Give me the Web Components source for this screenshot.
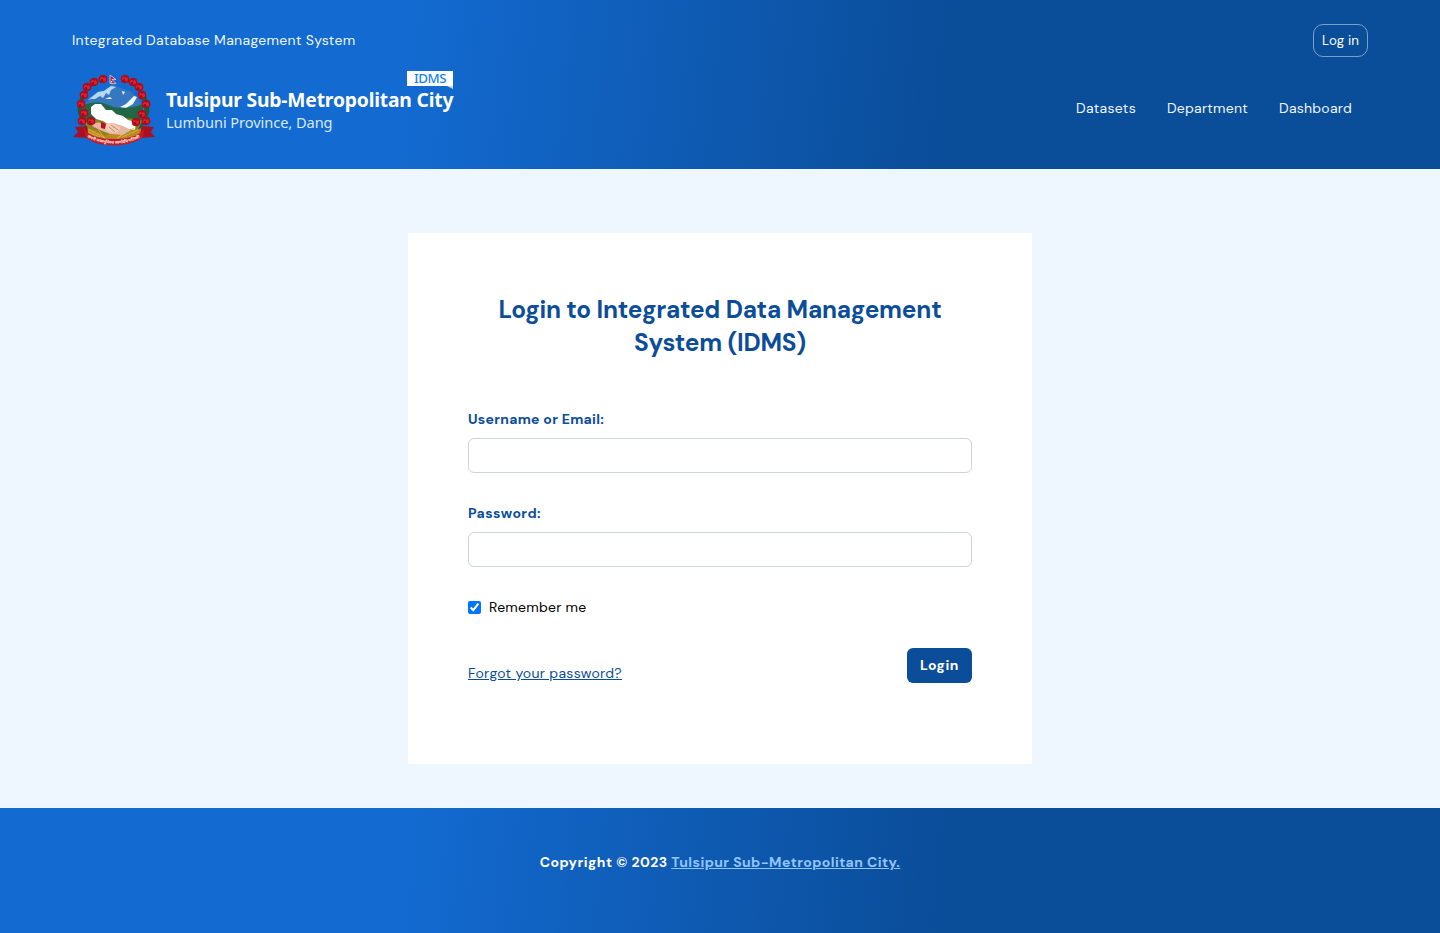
<!DOCTYPE html>
<html lang="en"><head><meta charset="utf-8"><title>IDMS Login</title>
<style>
html,body{margin:0;height:100%}
body{background:#eef6ff;font:14px/21px "DM Sans",Inter,sans-serif;font-optical-sizing:none;color:#000}
</style></head><body><idms-page></idms-page>
<script>
const define=(name,html,init)=>customElements.define(name,class extends HTMLElement{
  constructor(){super();this.attachShadow({mode:'open'}).innerHTML=html;}
  connectedCallback(){if(init)init(this);}
});

/* Tracks a line of text out to the width given in its "width" attribute. */
define('tracked-text','<style>:host{display:inline-block;white-space:nowrap}</style><slot></slot>',el=>{
  const w=parseFloat(el.getAttribute('width'));
  el.style.letterSpacing='0';
  const range=document.createRange();range.selectNodeContents(el);
  const n=el.textContent.length,natural=range.getBoundingClientRect().width;
  el.style.letterSpacing=((w-natural)/n).toFixed(3)+'px';
  el.style.width=w+'px';
});

/* Coat of arms: rhododendron wreath, mountain, map, clasped hands, ribbon. */
define('city-emblem',`<style>:host{display:block;width:84px;height:76px}svg{display:block}</style>
<svg width="84" height="76" viewBox="72 71 84 76">
<defs><clipPath id="c"><ellipse cx="113" cy="110" rx="31" ry="32"/></clipPath>
<g id="f"><path d="M-4 1Q-5-2-3-3Q-1-5 1-4Q4-4 4-1Q5 2 3 3Q1 5-1 4Q-4 4-4 1Z" fill="#ad0b1e"/><path d="M-3 0Q-2-4 0-1Q3-3 3 1Q1 4 0 1Q-3 3-3 0" fill="#dc2231"/><circle cx="-1" cy="1" r=".9" fill="#7f0716"/></g></defs>
<path d="M99 81Q81 91 80 111Q84 124 94 130M128 81Q146 91 147 111Q144 124 134 130" fill="none" stroke="#1c5b36" stroke-width="5"/>
<g clip-path="url(#c)"><path d="M80 75h70v65H80z" fill="#136ad0"/>
<path d="M84 106L90 97L97 92L105 90L113 84L120 88L130 91L139 99L145 110V121H82Z" fill="#3678bf"/>
<path d="M88 100L98 92L104 91L111 86L116 87L111 90L109 95L106 93L103 98L100 96L95 99L91 99Z" fill="#b9d8f1"/>
<path d="M120 107l6-3 8-8 3 1-4 7-7 4zM105 99l5-2 2 2zM122 91l3 1-2 3z" fill="#eff8ff"/>
<path d="M83 105Q97 100 106 104Q121 112 143 104V132H82Z" fill="#226744"/>
<path d="M80 124Q112 112 148 122V144H80Z" fill="#8d821f"/></g>
<path d="M91 107L95 104L101 104L106 110L112 110L116 114L123 116L128 120L136 122L135 130L127 129L119 127L111 126L103 121L96 119L91 114Z" fill="#fff"/>
<path d="M84 129Q94 127 104 136Q113 132 123 136Q134 127 143 129Q142 140 114 144Q89 141 84 129Z" fill="#b88a20"/>
<g fill="none" stroke="#dfb544" stroke-width=".8"><path d="M86 131l14 6m-12-8 17 9m-7-9 8 11m32-10-16 7m12-9-17 10m9-9-9 11"/></g>
<path d="M92 126Q96 120 104 124L113 123L123 126L131 130L123 135L110 134L100 130Z" fill="#e6b7a0"/>
<path d="M104 124l8-1 9 5-5 5-7-1-5-4z" fill="#f5cbb6"/><path d="M111 125l7 5m-9-3 6 5" stroke="#a66b58" stroke-width=".7"/>
<path d="M101 122l5 2-1 5-4-1z" fill="#b90f23"/>
<use href="#f" x="103" y="79"/><use href="#f" x="94" y="82"/><use href="#f" x="87" y="87"/><use href="#f" x="84" y="95"/><use href="#f" x="81" y="104"/><use href="#f" x="84" y="113"/><use href="#f" x="91" y="121"/>
<use href="#f" x="125" y="79"/><use href="#f" x="133" y="82"/><use href="#f" x="139" y="87"/><use href="#f" x="142" y="95"/><use href="#f" x="146" y="104"/><use href="#f" x="142" y="114"/><use href="#f" x="136" y="122"/><use href="#f" x="146" y="121"/><use href="#f" x="82" y="121"/>
<path d="M110 75L116 79.5H112L116 83.5H110Z" fill="#cf1731" stroke="#d8e5ff" stroke-width=".7"/><circle cx="111.5" cy="81.7" r=".8" fill="#fff"/>
<path d="M75 127L87 126L89 138L73 137L78 132ZM154 127L142 126L139 138L155 137L151 132Z" fill="#a90f20"/>
<path d="M84 129Q91 139 114 139Q137 139 144 129L143 137Q132 145.5 114 145.5Q96 145.5 86 138Z" fill="#c51a27"/>
<path id="t" d="M87 137Q98 143.7 114 143.7Q131 143.7 142 136" fill="none"/>
<text font-family="Noto Sans,sans-serif" font-size="4.2" font-weight="700" fill="#ffe9df"><textPath href="#t" textLength="55">जननी जन्मभूमिश्च स्वर्गादपि गरीयसी</textPath></text>
</svg>`);

define('city-brand',`<style>
:host{display:flex;align-items:flex-start;font-family:"Noto Sans",sans-serif;color:#fff}
.copy{position:relative;width:288px;margin-left:10px;padding-top:16px}
.name{display:block;font-size:19.3px;font-weight:700;line-height:26px}
.place{display:block;font-size:14.6px;line-height:22px;color:#d8e8fb;margin-top:-2px}
.tag{position:absolute;right:1px;top:0;width:46px;height:15px;background:#fff;color:#1682f5;font-size:13.3px;font-weight:500;line-height:14px;text-align:center}
.tag:after{content:"";position:absolute;right:0;top:15px;border-top:3px solid #c6d7e9;border-left:6px solid transparent}
</style><city-emblem></city-emblem><div class="copy"><tracked-text class="name" width="287.3">Tulsipur Sub-Metropolitan City</tracked-text><tracked-text class="place" width="166.5">Lumbuni Province, Dang</tracked-text><span class="tag"><tracked-text width="32">IDMS</tracked-text></span></div>`);

define('site-header',`<style>
:host{display:flex;flex-direction:column;box-sizing:border-box;height:169px;padding:24px 72px 0;background:linear-gradient(96deg,#136ad0 28.5%,#0a4d99 65.5%);color:#edf6ff}
.top,.main{display:flex;justify-content:space-between}.top{height:33px;align-items:center}
.login{box-sizing:border-box;width:55px;height:33px;border:1px solid #7c9fca;border-radius:10px;display:flex;align-items:center;justify-content:center;font-size:13.33px;color:#fff}
.main{margin-top:14px}nav{display:flex;gap:31px;margin-right:16px;padding-top:27px}
</style><div class="top"><tracked-text width="283.5">Integrated Database Management System</tracked-text><a class="login"><tracked-text width="37">Log in</tracked-text></a></div>
<div class="main"><city-brand></city-brand><nav><tracked-text width="60">Datasets</tracked-text><tracked-text width="81">Department</tracked-text><tracked-text width="73">Dashboard</tracked-text></nav></div>`);

define('form-field',`<style>:host{display:block;height:94px}label{display:block;color:#0b4d99;font-weight:700;height:21px}
input{display:block;box-sizing:border-box;width:100%;height:35px;margin:8px 0 0;border:1px solid #ced4da;border-radius:6px;background:#fff;padding:0 12px;font:inherit}</style>
<label><slot></slot></label><input>`,el=>{el.shadowRoot.querySelector('input').type=el.getAttribute('type')||'text';});

define('login-card',`<style>
:host{display:block;box-sizing:border-box;width:624px;height:531px;margin:64px auto 44px;padding:60px;background:#fff}
h1{margin:0 0 49px;padding-top:1px;font-size:24.4px;line-height:33px;font-weight:700;color:#0b4d99;text-align:center}h1 tracked-text{display:block;margin:0 auto}
.remember{display:flex;align-items:center;height:21px}
input{width:13px;height:13px;margin:0 8px 0 0}
.actions{display:flex;justify-content:space-between;margin-top:30px}
.forgot{margin-top:15px;color:#0b4d99;text-decoration:underline;height:21px}
button{width:65px;height:35px;border:0;border-radius:6px;background:#0b4d99;color:#fff;font:inherit;font-weight:700;padding:0}
</style><h1><tracked-text width="443">Login to Integrated Data Management</tracked-text><tracked-text width="172">System (IDMS)</tracked-text></h1>
<form-field><tracked-text width="136">Username or Email:</tracked-text></form-field>
<form-field type="password"><tracked-text width="73">Password:</tracked-text></form-field>
<div class="remember"><input type="checkbox" checked><tracked-text width="97.5">Remember me</tracked-text></div>
<div class="actions"><tracked-text class="forgot" width="154">Forgot your password?</tracked-text><button><tracked-text width="39">Login</tracked-text></button></div>`);

define('site-footer',`<style>:host{display:flex;justify-content:center;box-sizing:border-box;height:125px;padding-top:44px;background:linear-gradient(96deg,#136ad0 28.5%,#0a4d99 65.5%);color:#fff;font-weight:700}
p{display:flex;gap:3.5px;margin:0}.city{color:#91c5fd;text-decoration:underline}</style>
<p><tracked-text width="128">Copyright © 2023</tracked-text><tracked-text class="city" width="229">Tulsipur Sub-Metropolitan City.</tracked-text></p>`);

define('idms-page',`<style>:host{display:flow-root}main{display:flow-root}</style><site-header></site-header><main><login-card></login-card></main><site-footer></site-footer>`);
</script></body></html>
